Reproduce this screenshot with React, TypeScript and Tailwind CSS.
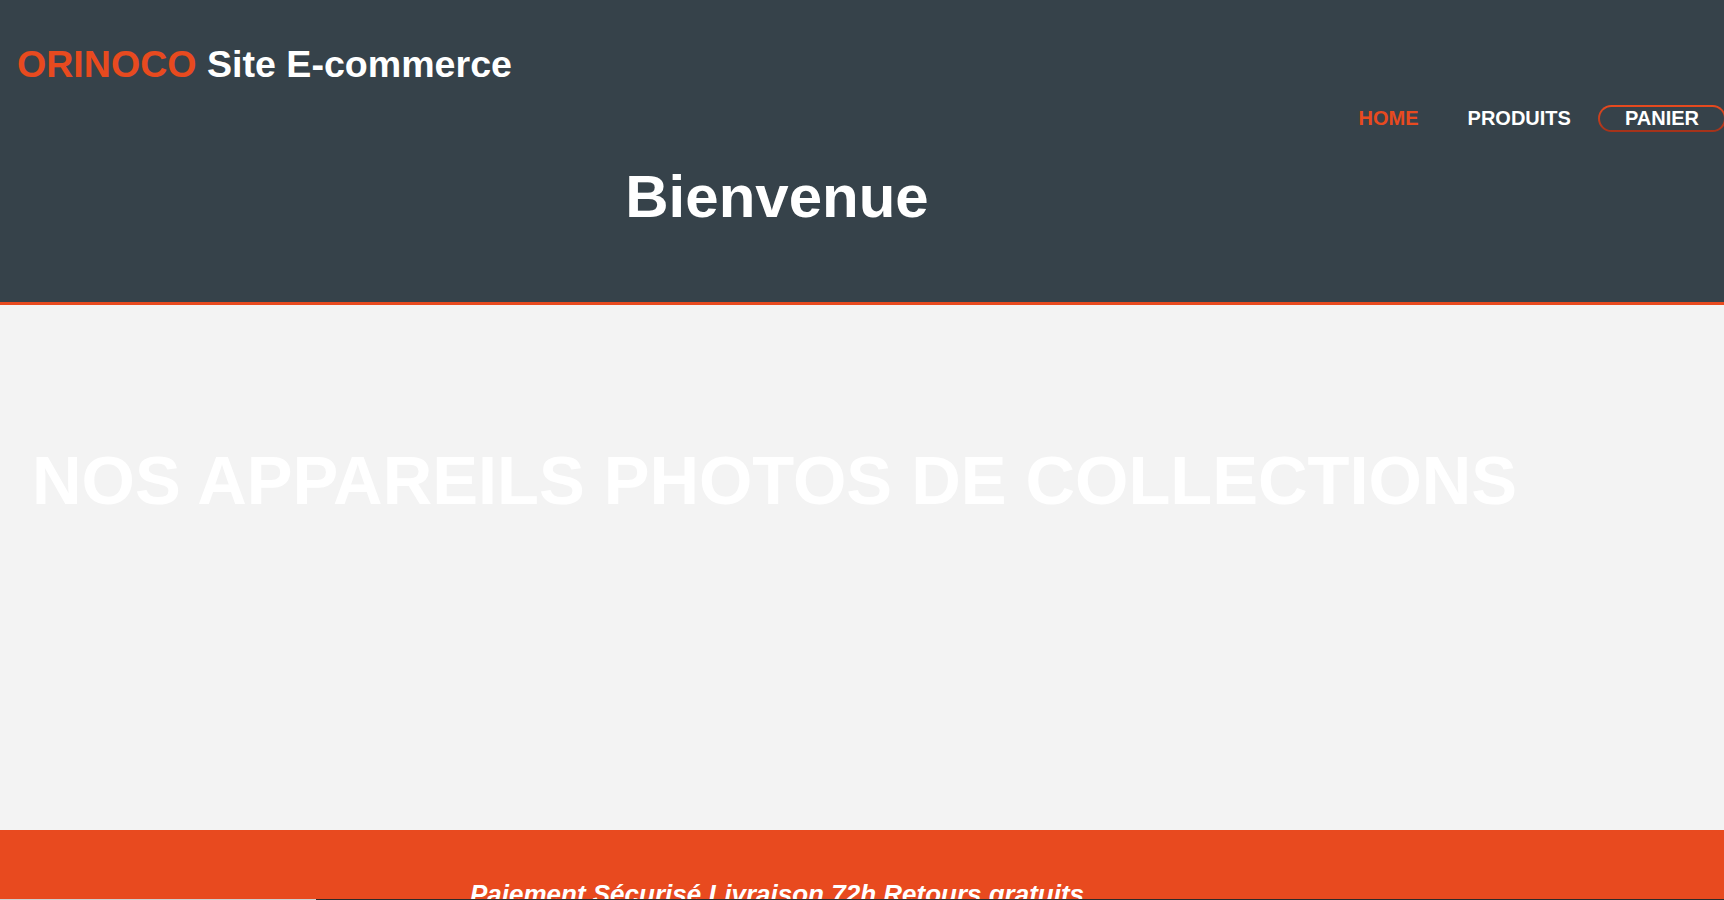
import React from "react";

export default function App() {
  const font = { fontFamily: '"Liberation Sans", Arial, sans-serif' };
  return (
    <div className="w-full overflow-hidden bg-[#f3f3f3]" style={font}>
      <header className="h-[305px] bg-[#36424a] border-b-[3px] border-[#e84a1f] box-border">
        <h1 className="pt-[42px] pl-[17px] text-[37.6px] leading-[44px] font-bold whitespace-nowrap">
          <span className="text-[#e84a1f]">ORINOCO</span>{" "}
          <span className="text-white">Site E-commerce</span>
        </h1>
        <nav className="mt-[19px] flex justify-end mr-[-2px]">
          <ul className="flex items-center text-[20px] leading-[23px] font-bold">
            <li className="pl-[25px] pr-[20px] text-[#e84a1f] border-2 border-transparent">HOME</li>
            <li className="px-[25px] text-white border-2 border-transparent">PRODUITS</li>
            <li className="rounded-full bg-gradient-to-b from-[#e84a1f] to-[#a3321a] p-[2px]">
              <div className="rounded-full bg-[#36424a] px-[25px] text-white">PANIER</div>
            </li>
          </ul>
        </nav>
        <div className="w-[1554px] mt-[30px] text-center text-white text-[60px] leading-[69px] font-bold">
          Bienvenue
        </div>
      </header>
      <main className="h-[525px] bg-[#f3f3f3] pt-[137px] pl-[32px]">
        <h2 className="text-white text-[68.6px] leading-[78px] font-bold whitespace-nowrap">
          NOS APPAREILS PHOTOS DE COLLECTIONS
        </h2>
      </main>
      <footer className="bg-[#e84a1f] pt-[56px]">
        <p className="w-[1554px] text-center text-white italic font-bold text-[26px] leading-[17px] h-[13px] overflow-visible">
          Paiement Sécurisé Livraison 72h Retours gratuits
        </p>
        <div className="relative flex h-[40px]">
          <div className="w-[316px] bg-[#cfcfcf]" />
          <div className="flex-1 bg-[#2b2b2b]" />
        </div>
      </footer>
    </div>
  );
}
